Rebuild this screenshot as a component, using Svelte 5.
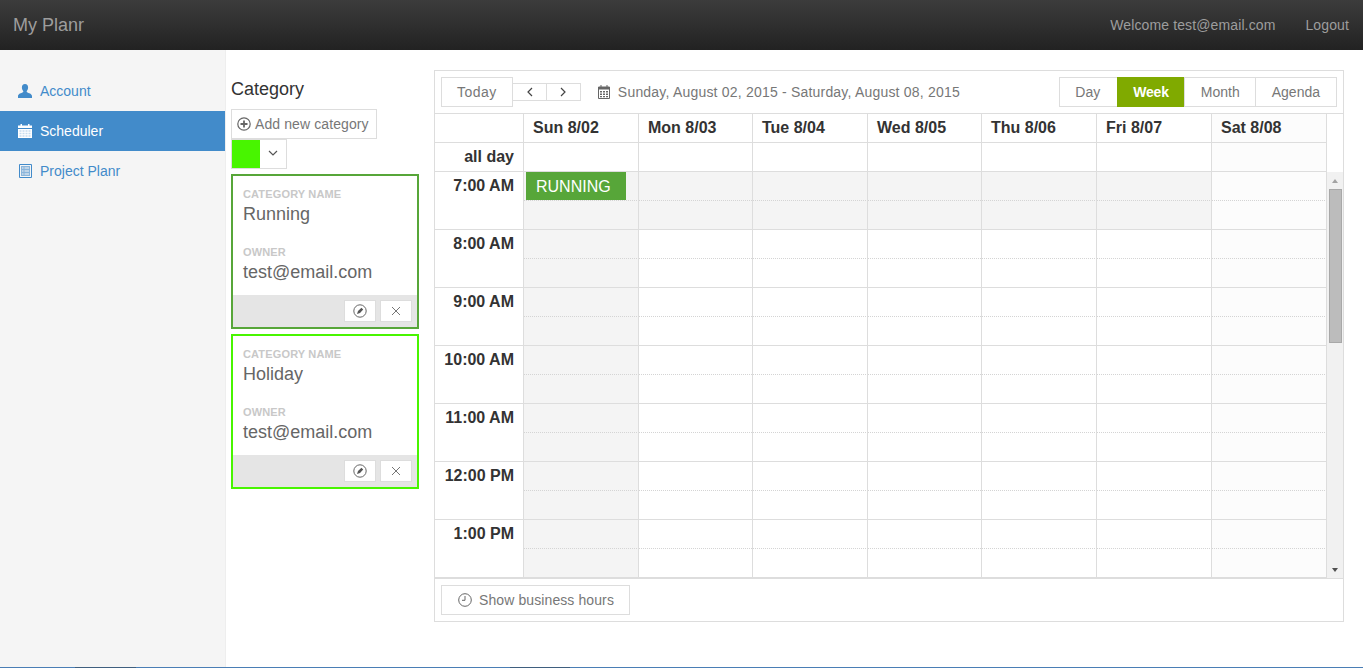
<script>
  const days = ['Sun 8/02', 'Mon 8/03', 'Tue 8/04', 'Wed 8/05', 'Thu 8/06', 'Fri 8/07', 'Sat 8/08'];
  const hours = ['7:00 AM', '8:00 AM', '9:00 AM', '10:00 AM', '11:00 AM', '12:00 PM', '1:00 PM'];
  const categories = [
    { name: 'Running', owner: 'test@email.com', color: '#57a639' },
    { name: 'Holiday', owner: 'test@email.com', color: '#48f500' }
  ];

  // first hour is outside business hours, so is all of Sunday
  function slotClass(h, d) {
    if (d === 6) return 'slot weekend';
    if (d === 0 || h === 0) return 'slot off';
    return 'slot';
  }
</script>

<header class="navbar">
  <a class="brand" href="#top">My Planr</a>
  <div class="nav-right">
    <span>Welcome test@email.com</span>
    <a href="#top">Logout</a>
  </div>
</header>

<div class="page">
  <aside class="sidebar">
    <ul>
      <li>
        <a href="#top">
          <svg width="14" height="14" viewBox="0 0 14 14"><path d="M7 0C4.9 0 3.9 1.5 3.9 3.4c0 1.500.6 2.700 1.300 3.500.3.400.2 1-.2 1.300C3.500 9.100 0 9.600 0 12.200V14h14v-1.800c0-2.600-3.500-3.100-5-4-.4-.3-.5-.9-.2-1.300.7-.8 1.300-2 1.300-3.500C10.100 1.500 9.100 0 7 0z" fill="currentColor"/></svg>
          Account
        </a>
      </li>
      <li class="active">
        <a href="#top">
          <svg width="14" height="14" viewBox="0 0 14 14"><path d="M0 1.500h2.500V0h1.500v1.500h6V0h1.500v1.500H14V4H0z" fill="currentColor"/><path d="M0 5h14v9H0z" fill="currentColor"/><path d="M1.500 6.300h2v1.400h-2zm3 0h2v1.400h-2zm3 0h2v1.400h-2zm3 0h2v1.400h-2zM1.500 8.800h2v1.400h-2zm3 0h2v1.400h-2zm3 0h2v1.400h-2zm3 0h2v1.400h-2zM1.500 11.300h2v1.400h-2zm3 0h2v1.400h-2zm3 0h2v1.400h-2zm3 0h2v1.400h-2z" fill="#428bca" fill-opacity=".3"/></svg>
          Scheduler
        </a>
      </li>
      <li>
        <a href="#top">
          <svg width="14" height="14" viewBox="0 0 14 14"><path d="M1.500.500h12v13h-12z" fill="none" stroke="currentColor"/><path d="M3 2h9v10H3zM4 3.500v1h1.500v-1zm2.500 0v1H11v-1zM4 6.500v1h1.500v-1zm2.500 0v1H11v-1zM4 9.500v1h1.500v-1zm2.500 0v1H11v-1z" fill="currentColor" fill-opacity=".6" fill-rule="evenodd"/></svg>
          Project Planr
        </a>
      </li>
    </ul>
  </aside>

  <section class="categories">
    <h3>Category</h3>
    <button class="add-btn">
      <svg width="14" height="14" viewBox="0 0 14 14"><circle cx="7" cy="7" r="6.200" fill="none" stroke="#666" stroke-width="1.200"/><path d="M7 3.500v7M3.500 7h7" stroke="#666" stroke-width="1.800"/></svg>
      Add new category
    </button>
    <div class="picker">
      <span class="swatch"></span>
      <span class="caret">
        <svg width="10" height="6" viewBox="0 0 10 6"><path d="M1 1l4 4 4-4" fill="none" stroke="#555" stroke-width="1.200"/></svg>
      </span>
    </div>
    {#each categories as cat}
      <div class="card" style="border-color: {cat.color}">
        <div class="card-body">
          <div class="label">CATEGORY NAME</div>
          <div class="value">{cat.name}</div>
          <div class="label second">OWNER</div>
          <div class="value">{cat.owner}</div>
        </div>
        <div class="card-foot">
          <button aria-label="Edit">
            <svg width="14" height="14" viewBox="0 0 14 14"><circle cx="7" cy="7" r="6.200" fill="none" stroke="#666" stroke-width="1"/><path d="M4 10l1-3 3.500-3.200 1.700 1.700L7 9z" fill="#555"/></svg>
          </button>
          <button aria-label="Delete">
            <svg width="10" height="10" viewBox="0 0 10 10"><path d="M1 1l8 8M9 1l-8 8" stroke="#666" stroke-width=".9"/></svg>
          </button>
        </div>
      </div>
    {/each}
  </section>

  <section class="calendar">
    <div class="toolbar">
      <button class="btn today">Today</button>
      <div class="pager">
        <button aria-label="Previous">
          <svg width="7" height="10" viewBox="0 0 7 10"><path d="M6 1L2 5l4 4" fill="none" stroke="#444" stroke-width="1.200"/></svg>
        </button>
        <button aria-label="Next">
          <svg width="7" height="10" viewBox="0 0 7 10"><path d="M1 1l4 4-4 4" fill="none" stroke="#444" stroke-width="1.200"/></svg>
        </button>
      </div>
      <svg class="date-icon" width="12" height="14" viewBox="0 0 12 14"><path d="M.5 2h11v11.500H.5z" fill="none" stroke="#666"/><path d="M2.500 0h1v3h-1zM8.500 0h1v3h-1zM0 2h12v2.500H0z" fill="#666"/><path d="M2 6h2v1.500H2zM5 6h2v1.500H5zM8 6h2v1.500H8zM2 8.500h2V10H2zM5 8.500h2V10H5zM8 8.500h2V10H8zM2 11h2v1.200H2zM5 11h2v1.200H5zM8 11h2v1.200H8z" fill="#666"/></svg>
      <span class="range">Sunday, August 02, 2015 - Saturday, August 08, 2015</span>
      <div class="views">
        <button>Day</button>
        <button class="active">Week</button>
        <button>Month</button>
        <button>Agenda</button>
      </div>
    </div>

    <div class="head-wrap">
      <div class="row head">
        <div class="cell"></div>
        {#each days as day, d}
          <div class="cell day" class:weekend={d === 6}>{day}</div>
        {/each}
      </div>
      <div class="row allday">
        <div class="cell time">all day</div>
        {#each days as day, d}
          <div class="cell" class:weekend={d === 6}></div>
        {/each}
      </div>
    </div>

    <div class="scroll">
      <div class="rows">
        {#each hours as hour, h}
          <div class="row hour">
            <div class="cell time">{hour}</div>
            {#each days as day, d}
              <div class="cell {slotClass(h, d)}">
                {#if h === 0 && d === 0}
                  <div class="event">RUNNING</div>
                {/if}
              </div>
            {/each}
          </div>
        {/each}
      </div>
      <div class="scrollbar">
        <span class="arrow up"></span>
        <span class="thumb"></span>
        <span class="arrow down"></span>
      </div>
    </div>

    <div class="cal-foot">
      <button class="btn">
        <svg width="14" height="14" viewBox="0 0 14 14"><circle cx="7" cy="7" r="6.300" fill="none" stroke="#666" stroke-width="1"/><path d="M7 3v4.300H4" fill="none" stroke="#666" stroke-width="1"/></svg>
        Show business hours
      </button>
    </div>
  </section>
</div>
<div class="page-edge"></div>

<style>
  :global(body) {
    font-family: "Liberation Sans", Arial, sans-serif;
    font-size: 14px;
    color: #333;
    background: #fff;
  }

  button {
    font-family: inherit;
    background: #fff;
    cursor: pointer;
    padding: 0;
  }

  .navbar {
    height: 50px;
    display: flex;
    align-items: center;
    justify-content: space-between;
    background: linear-gradient(to bottom, #3c3c3c, #222);
  }

  .brand {
    margin-left: 13px;
    font-size: 18px;
    color: #9d9d9d;
    text-decoration: none;
  }

  .nav-right {
    display: flex;
    gap: 30px;
    margin-right: 14px;
    color: #9d9d9d;
    letter-spacing: .12px;
  }

  .nav-right a {
    color: #9d9d9d;
    text-decoration: none;
  }

  .page {
    display: flex;
    height: 617px;
  }

  .page-edge {
    height: 1px;
    background: linear-gradient(to right, #4a7eb5 75px, #3f5f7f 75px, #3f5f7f 136px, #4a7eb5 136px, #4a7eb5 510px, #3f5f7f 510px, #3f5f7f 570px, #4a7eb5 570px);
  }

  .sidebar {
    width: 225px;
    flex: none;
    padding-top: 21px;
    background: #f5f5f5;
    border-right: 1px solid #eee;
  }

  .sidebar ul {
    list-style: none;
    margin: 0;
    padding: 0;
  }

  .sidebar a {
    display: flex;
    align-items: center;
    gap: 8px;
    height: 40px;
    padding-left: 18px;
    color: #428bca;
    text-decoration: none;
  }

  .sidebar .active a {
    background: #428bca;
    color: #fff;
  }

  .categories {
    width: 188px;
    flex: none;
    margin-left: 5px;
  }

  h3 {
    margin: 29px 0 10px;
    font-size: 18px;
    font-weight: 400;
    line-height: 20px;
    color: #333;
  }

  .add-btn {
    display: flex;
    align-items: center;
    gap: 4px;
    height: 30px;
    padding: 0 7px 0 5px;
    border: 1px solid #ddd;
    font-size: 14px;
    letter-spacing: .1px;
    color: #777;
  }

  .picker {
    display: flex;
    width: 56px;
    height: 30px;
    box-sizing: border-box;
    border: 1px solid #ddd;
    margin-bottom: 5px;
  }

  .swatch {
    width: 28px;
    background: #48f500;
  }

  .caret {
    flex: 1;
    text-align: center;
    line-height: 14px;
    padding-top: 4px;
  }

  .card {
    border: 2px solid;
    margin-bottom: 5px;
  }

  .card-body {
    height: 119px;
    box-sizing: border-box;
    padding: 11px 10px 0;
  }

  .label {
    font-size: 11px;
    font-weight: 700;
    line-height: 14px;
    letter-spacing: .15px;
    color: #c8c8c8;
  }

  .label.second {
    margin-top: 18px;
  }

  .value {
    font-size: 18px;
    line-height: 26px;
    color: #666;
  }

  .card-foot {
    display: flex;
    justify-content: flex-end;
    gap: 4px;
    height: 32px;
    box-sizing: border-box;
    padding: 5px 5px 0 0;
    background: #e5e5e5;
  }

  .card-foot button {
    display: flex;
    align-items: center;
    justify-content: center;
    width: 32px;
    height: 22px;
    border: 1px solid #ddd;
  }

  .calendar {
    width: 910px;
    height: 552px;
    box-sizing: border-box;
    flex: none;
    margin: 20px 0 0 15px;
    border: 1px solid #ddd;
  }

  .toolbar {
    display: flex;
    align-items: center;
    height: 43px;
    box-sizing: border-box;
    padding: 0 6px;
    border-bottom: 1px solid #ddd;
  }

  .btn {
    display: inline-flex;
    align-items: center;
    height: 30px;
    padding: 0 15px 0 16px;
    border: 1px solid #ddd;
    font-size: 14px;
    letter-spacing: .1px;
    color: #777;
  }

  .btn svg {
    margin-right: 7px;
  }

  .today {
    padding: 0 15px;
    letter-spacing: .5px;
  }

  .pager {
    display: flex;
  }

  .pager button {
    display: flex;
    align-items: center;
    justify-content: center;
    width: 35px;
    height: 18px;
    border: 1px solid #ddd;
    margin-left: -1px;
  }

  .date-icon {
    margin-left: 17px;
  }

  .range {
    margin-left: 8px;
    letter-spacing: .2px;
    color: #777;
  }

  .views {
    display: flex;
    margin-left: auto;
  }

  .views button {
    height: 30px;
    padding: 0 15px;
    border: 1px solid #ddd;
    margin-left: -1px;
    font-size: 14px;
    color: #777;
  }

  .views button:first-child {
    padding-right: 17px;
  }

  .views button:nth-child(3) {
    padding-left: 16px;
  }

  .views button:last-child {
    padding: 0 16px;
  }

  .views .active {
    background: #80aa00;
    border-color: #80aa00;
    color: #fff;
    font-weight: 700;
    letter-spacing: -.2px;
  }

  .row {
    display: grid;
    grid-template-columns: 89px 115px 114px 115px 114px 115px 115px 115px;
    width: 892px;
  }

  .cell {
    box-sizing: border-box;
    border-right: 1px solid #ddd;
    border-bottom: 1px solid #ddd;
  }

  .head .cell,
  .allday .cell {
    height: 29px;
  }

  .head-wrap .cell.weekend {
    background: #fcfcfc;
  }

  .day {
    padding-left: 9px;
    font-size: 16px;
    font-weight: 700;
    line-height: 28px;
    color: #333;
  }

  .time {
    padding-right: 9px;
    text-align: right;
    font-size: 16px;
    font-weight: 700;
    line-height: 28px;
    color: #333;
  }

  .scroll {
    display: flex;
    height: 406px;
    overflow: hidden;
  }

  .rows {
    width: 892px;
    flex: none;
  }

  .hour .cell {
    height: 58px;
  }

  .slot {
    position: relative;
    background-image: linear-gradient(to right, #d4d4d4 1px, transparent 1px);
    background-size: 2px 1px;
    background-position: 0 28px;
    background-repeat: repeat-x;
  }

  .slot.off {
    background-color: #f4f4f4;
  }

  .slot.weekend {
    background-color: #fcfcfc;
  }

  .event {
    position: absolute;
    top: 0;
    left: 2px;
    width: 100px;
    height: 28px;
    box-sizing: border-box;
    padding-left: 10px;
    background: #57a639;
    color: #fff;
    font-size: 16px;
    line-height: 29px;
  }

  .scrollbar {
    display: flex;
    flex-direction: column;
    align-items: center;
    width: 16px;
    height: 406px;
    background: #f1f1f1;
  }

  .arrow {
    width: 0;
    height: 0;
    border-left: 3.5px solid transparent;
    border-right: 3.5px solid transparent;
  }

  .arrow.up {
    margin-top: 7px;
    border-bottom: 4px solid #a3a3a3;
  }

  .arrow.down {
    margin-top: auto;
    margin-bottom: 6px;
    border-top: 4px solid #505050;
  }

  .thumb {
    width: 13px;
    height: 154px;
    box-sizing: border-box;
    margin-top: 6px;
    background: #bcbcbc;
    border: 1px solid #a8a8a8;
  }

  .cal-foot {
    padding: 6px;
    border-top: 1px solid #ddd;
  }
</style>
